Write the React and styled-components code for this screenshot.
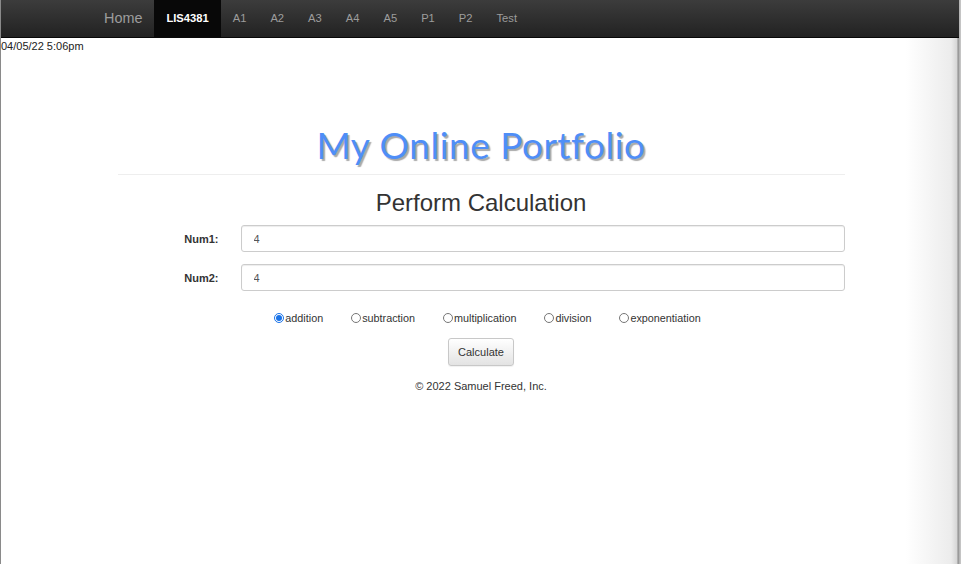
import React, { useState } from "react";
import styled, { createGlobalStyle } from "styled-components";

const GlobalStyle = createGlobalStyle`
  html, body {
    margin: 0;
    padding: 0;
  }
  body {
    font-family: "Liberation Sans", Arial, sans-serif;
    font-size: 11px;
    color: #333;
    background: #fff;
  }
`;

const Page = styled.div`
  min-height: 564px;
  border-left: 1px solid #8a8a8a;
  box-sizing: border-box;
  background: linear-gradient(
    to right,
    #fff 0,
    #fff 905px,
    #ececec 950px,
    #d6d6d6 956px,
    #8c8c8c 957px,
    #c4c4c4 959px
  );
`;

const Navbar = styled.nav`
  height: 37px;
  border-bottom: 1px solid #080808;
  background: linear-gradient(to bottom, #3c3c3c 0, #222 100%);
  margin-right: 2px;
`;

const NavInner = styled.div`
  display: flex;
  align-items: stretch;
  height: 100%;
  padding-left: 91px;
`;

const Brand = styled.a`
  display: flex;
  align-items: center;
  padding: 0 12px 1px;
  font-size: 14.4px;
  color: #9d9d9d;
  text-decoration: none;
`;

const NavLink = styled.a`
  display: flex;
  align-items: center;
  padding: 0 12px 1px;
  font-size: 11.2px;
  text-decoration: none;
  color: ${(p) => (p.$active ? "#fff" : "#9d9d9d")};
  font-weight: ${(p) => (p.$active ? "bold" : "normal")};
  background: ${(p) => (p.$active ? "#080808" : "transparent")};
`;

const Stamp = styled.div`
  font-size: 11px;
  line-height: 14px;
  color: #222;
  padding-top: 1px;
`;

const Container = styled.div`
  width: 727px;
  margin: 0 auto;
  text-align: center;
`;

const Title = styled.h1`
  margin: 72px 0 0;
  font-family: "Lato", "DejaVu Sans", sans-serif;
  font-weight: normal;
  font-size: 37px;
  letter-spacing: 0.5px;
  line-height: 40px;
  color: #4f8ef7;
  text-shadow: 2px 2px 1px #a9a9a9;
`;

const Rule = styled.hr`
  margin: 9px 0 0;
  border: 0;
  border-top: 1px solid #eee;
`;

const Heading = styled.h2`
  margin: 14px 0 0;
  font-weight: normal;
  font-size: 24px;
  line-height: 28px;
  color: #333;
`;

const Form = styled.form`
  margin-top: 8px;
  display: flex;
  flex-direction: column;
  gap: 12px;
`;

const Field = styled.div`
  display: grid;
  grid-template-columns: 101px 1fr;
  column-gap: 22px;
  align-items: center;
`;

const Label = styled.label`
  text-align: right;
  font-weight: bold;
  font-size: 11px;
  color: #333;
`;

const Input = styled.input`
  box-sizing: border-box;
  height: 27px;
  padding: 0 12px;
  border: 1px solid #ccc;
  border-radius: 3px;
  box-shadow: inset 0 1px 1px rgba(0, 0, 0, 0.075);
  font-family: "Liberation Sans", Arial, sans-serif;
  font-size: 11px;
  color: #555;
  background: #fff;
  outline: none;
`;

const Options = styled.div`
  margin-top: 8px;
  display: flex;
  justify-content: center;
  gap: 28px;
  padding-left: 13px;
  line-height: 14px;
`;

const Option = styled.label`
  display: flex;
  align-items: center;
  font-size: 10.8px;
  color: #333;
`;

const Radio = styled.input`
  width: 10px;
  height: 10px;
  margin: 0 1px 1px 0;
  accent-color: #1a73e8;
`;

const Button = styled.button`
  align-self: center;
  margin-top: 1px;
  width: 66px;
  height: 28px;
  border: 1px solid #c8c8c8;
  border-radius: 3px;
  background: linear-gradient(to bottom, #fff 0, #e3e3e3 100%);
  box-shadow: 0 1px 1px rgba(0, 0, 0, 0.06);
  font-family: "Liberation Sans", Arial, sans-serif;
  font-size: 11px;
  color: #333;
  padding: 0;
`;

const Footer = styled.footer`
  margin-top: 13px;
  font-size: 11px;
  line-height: 14px;
  color: #333;
`;

const links = ["A1", "A2", "A3", "A4", "A5", "P1", "P2", "Test"];
const ops = ["addition", "subtraction", "multiplication", "division", "exponentiation"];

export default function App() {
  const [op, setOp] = useState("addition");
  return (
    <Page>
      <GlobalStyle />
      <Navbar>
        <NavInner>
          <Brand href="#">Home</Brand>
          <NavLink href="#" $active>
            LIS4381
          </NavLink>
          {links.map((l) => (
            <NavLink href="#" key={l}>
              {l}
            </NavLink>
          ))}
        </NavInner>
      </Navbar>
      <Stamp>04/05/22 5:06pm</Stamp>
      <Container>
        <Title>My Online Portfolio</Title>
        <Rule />
        <Heading>Perform Calculation</Heading>
        <Form onSubmit={(e) => e.preventDefault()}>
          <Field>
            <Label htmlFor="num1">Num1:</Label>
            <Input id="num1" defaultValue="4" />
          </Field>
          <Field>
            <Label htmlFor="num2">Num2:</Label>
            <Input id="num2" defaultValue="4" />
          </Field>
          <Options>
            {ops.map((o) => (
              <Option key={o}>
                <Radio
                  type="radio"
                  name="op"
                  checked={op === o}
                  onChange={() => setOp(o)}
                />
                {o}
              </Option>
            ))}
          </Options>
          <Button type="submit">Calculate</Button>
        </Form>
        <Footer>© 2022 Samuel Freed, Inc.</Footer>
      </Container>
    </Page>
  );
}
